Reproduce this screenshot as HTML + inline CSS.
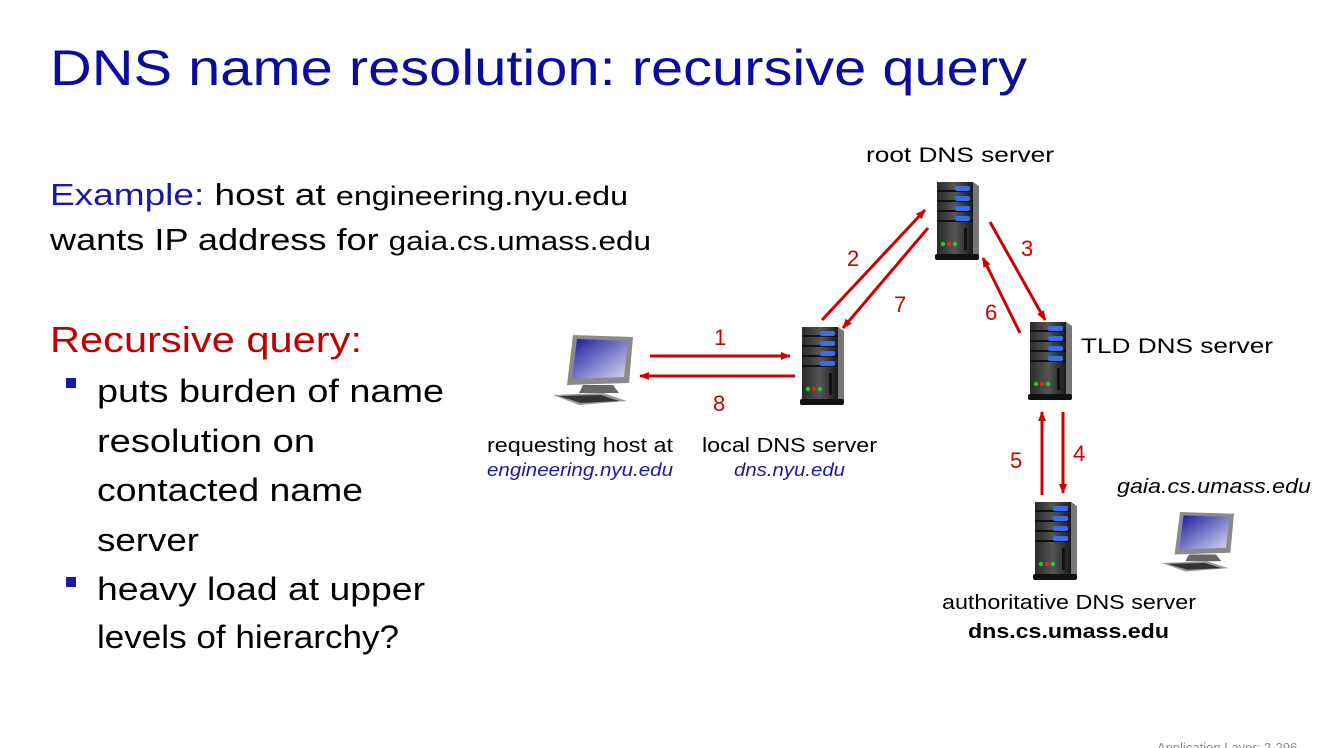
<!DOCTYPE html>
<html><head><meta charset="utf-8"><style>
html,body{margin:0;padding:0;background:#fff;width:1335px;height:748px;overflow:hidden}
svg{display:block}
</style></head><body>
<svg width="1335" height="748" viewBox="0 0 1335 748" xmlns="http://www.w3.org/2000/svg">
<defs>
<linearGradient id="sv" x1="0" x2="1"><stop offset="0" stop-color="#2a2a2a"/><stop offset=".5" stop-color="#555"/><stop offset="1" stop-color="#1a1a1a"/></linearGradient>
<linearGradient id="scr" x1="0" y1="0" x2="1" y2="1"><stop offset="0" stop-color="#1a1aa0"/><stop offset="1" stop-color="#d8d8f0"/></linearGradient>
<marker id="ah" markerWidth="10" markerHeight="8" refX="9" refY="4" orient="auto" markerUnits="userSpaceOnUse"><path d="M0,0 L10,4 L0,8 z" fill="#cc0000"/></marker>
<g id="server">
<rect x="2" y="2" width="36" height="74" fill="url(#sv)"/>
<path d="M38 2 L44 6 L44 78 L38 76 z" fill="#777"/>
<rect x="0" y="74" width="44" height="6" rx="2" fill="#111"/>
<rect x="2" y="10" width="36" height="2" fill="#111"/>
<rect x="2" y="20" width="36" height="2" fill="#111"/>
<rect x="2" y="30" width="36" height="2" fill="#111"/>
<rect x="2" y="40" width="36" height="2" fill="#111"/>
<rect x="20" y="6" width="15" height="5" rx="2" fill="#3a6ee8"/>
<rect x="20" y="16" width="15" height="5" rx="2" fill="#3a6ee8"/>
<rect x="20" y="26" width="15" height="5" rx="2" fill="#3a6ee8"/>
<rect x="20" y="36" width="15" height="5" rx="2" fill="#3a6ee8"/>
<rect x="29" y="48" width="3" height="22" fill="#111"/>
<circle cx="8" cy="64" r="2.2" fill="#2c2"/><circle cx="14" cy="64" r="2.2" fill="#e22"/><circle cx="20" cy="64" r="2.2" fill="#2c2"/>
</g>
<g id="pc">
<path d="M20 0 L80 2 L76 48 L14 50 z" fill="#8a8a8a"/>
<path d="M24 4 L75 6 L71 42 L19 44 z" fill="url(#scr)"/>
<path d="M30 50 L60 50 L66 58 L26 58 z" fill="#666"/>
<path d="M0 60 L50 58 L74 66 L26 70 z" fill="#999"/>
<path d="M6 61 L48 60 L66 66 L28 68 z" fill="#333"/>
</g>
</defs>

<text x="50" y="85" font-family="Liberation Sans, sans-serif" font-size="50" fill="#0c0c9c" textLength="977" lengthAdjust="spacingAndGlyphs">DNS name resolution: recursive query</text>

<g font-family="Liberation Sans, sans-serif" fill="#000">
<text x="50" y="205" font-size="31" textLength="578" lengthAdjust="spacingAndGlyphs"><tspan fill="#1a1aa0">Example:</tspan> host at <tspan font-size="27">engineering.nyu.edu</tspan></text>
<text x="50" y="250" font-size="31" textLength="601" lengthAdjust="spacingAndGlyphs">wants IP address for <tspan font-size="27">gaia.cs.umass.edu</tspan></text>
<text x="50" y="352" font-size="36" fill="#c00000" textLength="312" lengthAdjust="spacingAndGlyphs">Recursive query:</text>
<rect x="66" y="378" width="10" height="10" fill="#1a1aa0"/>
<rect x="66" y="577" width="10" height="10" fill="#1a1aa0"/>
<text x="97" y="402" font-size="32" textLength="347" lengthAdjust="spacingAndGlyphs">puts burden of name</text>
<text x="97" y="452" font-size="32" textLength="218" lengthAdjust="spacingAndGlyphs">resolution on</text>
<text x="97" y="501" font-size="32" textLength="266" lengthAdjust="spacingAndGlyphs">contacted name</text>
<text x="97" y="551" font-size="32" textLength="102" lengthAdjust="spacingAndGlyphs">server</text>
<text x="97" y="600" font-size="32" textLength="328" lengthAdjust="spacingAndGlyphs">heavy load at upper</text>
<text x="97" y="648" font-size="32" textLength="302" lengthAdjust="spacingAndGlyphs">levels of hierarchy?</text>
</g>

<use href="#server" x="800" y="325"/>
<use href="#server" x="935" y="180"/>
<use href="#server" x="1028" y="320"/>
<use href="#server" x="1033" y="500"/>
<use href="#pc" x="553" y="335"/>
<g transform="translate(1162,512) scale(0.9,0.85)"><use href="#pc"/></g>

<g stroke="#cc0000" stroke-width="3" marker-end="url(#ah)">
<line x1="650" y1="356" x2="790" y2="356"/>
<line x1="795" y1="376" x2="640" y2="376"/>
<line x1="822" y1="320" x2="925" y2="210"/>
<line x1="928" y1="228" x2="843" y2="328"/>
<line x1="990" y1="222" x2="1045" y2="320"/>
<line x1="1020" y1="333" x2="983" y2="258"/>
<line x1="1042" y1="495" x2="1042" y2="412"/>
<line x1="1063" y1="412" x2="1063" y2="493"/>
</g>

<g font-family="Liberation Sans, sans-serif" font-size="22" fill="#cc0000">
<text x="714" y="345">1</text><text x="713" y="411">8</text>
<text x="847" y="266">2</text><text x="894" y="312">7</text>
<text x="1021" y="256">3</text><text x="985" y="320">6</text>
<text x="1010" y="468">5</text><text x="1073" y="461">4</text>
</g>

<g font-family="Liberation Sans, sans-serif" font-size="21" fill="#000">
<text x="866" y="162" textLength="188" lengthAdjust="spacingAndGlyphs">root DNS server</text>
<text x="1081" y="353" textLength="192" lengthAdjust="spacingAndGlyphs">TLD DNS server</text>
<text x="487" y="452" font-size="20" textLength="186" lengthAdjust="spacingAndGlyphs">requesting host at</text>
<text x="487" y="476" font-size="18" font-style="italic" fill="#1a1aa0" textLength="186" lengthAdjust="spacingAndGlyphs">engineering.nyu.edu</text>
<text x="702" y="452" font-size="20" textLength="175" lengthAdjust="spacingAndGlyphs">local DNS server</text>
<text x="734" y="476" font-size="18" font-style="italic" fill="#1a1aa0" textLength="111" lengthAdjust="spacingAndGlyphs">dns.nyu.edu</text>
<text x="1117" y="493" font-size="20" font-style="italic" textLength="194" lengthAdjust="spacingAndGlyphs">gaia.cs.umass.edu</text>
<text x="942" y="609" font-size="20" textLength="254" lengthAdjust="spacingAndGlyphs">authoritative DNS server</text>
<text x="968" y="638" font-size="20" font-weight="bold" textLength="201" lengthAdjust="spacingAndGlyphs">dns.cs.umass.edu</text>
</g>
<text x="1157" y="752" font-family="Liberation Sans, sans-serif" font-size="13" fill="#888">Application Layer: 2-296</text>
</svg>
</body></html>
